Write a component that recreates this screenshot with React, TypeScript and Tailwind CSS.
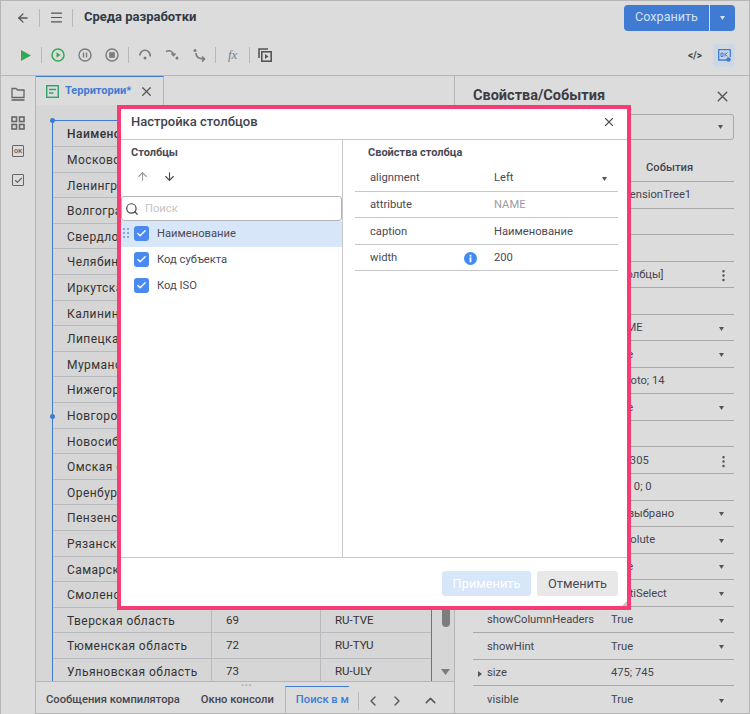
import { ArrowLeft, ArrowDown, ArrowUp, ChevronLeft, ChevronRight, ChevronUp, Check, EllipsisVertical, Menu, Search, X } from "lucide-react";

const FONT = "font-['Roboto','Liberation_Sans',sans-serif]";

const territories: [string, string, string][] = [
  ["Наименование", "Код субъекта", "Код ISO"],
  ["Московская область", "50", "RU-MOS"],
  ["Ленинградская область", "47", "RU-LEN"],
  ["Волгоградская область", "34", "RU-VGG"],
  ["Свердловская область", "66", "RU-SVE"],
  ["Челябинская область", "74", "RU-CHE"],
  ["Иркутская область", "38", "RU-IRK"],
  ["Калининградская область", "39", "RU-KGD"],
  ["Липецкая область", "48", "RU-LIP"],
  ["Мурманская область", "51", "RU-MUR"],
  ["Нижегородская область", "52", "RU-NIZ"],
  ["Новгородская область", "53", "RU-NGR"],
  ["Новосибирская область", "54", "RU-NVS"],
  ["Омская область", "55", "RU-OMS"],
  ["Оренбургская область", "56", "RU-ORE"],
  ["Пензенская область", "58", "RU-PNZ"],
  ["Рязанская область", "62", "RU-RYA"],
  ["Самарская область", "63", "RU-SAM"],
  ["Смоленская область", "67", "RU-SMO"],
  ["Тверская область", "69", "RU-TVE"],
  ["Тюменская область", "72", "RU-TYU"],
  ["Ульяновская область", "73", "RU-ULY"],
];

// name, value, trailing control
const properties: [string, string, "" | "caret" | "dots"][] = [
  ["id", "dimensionTree1", ""],
  ["", "", ""],
  ["", "", ""],
  ["columns", "[Столбцы]", "dots"],
  ["", "", ""],
  ["keyField", "NAME", "caret"],
  ["enabled", "True", "caret"],
  ["font", "Roboto; 14", ""],
  ["hasBorder", "True", "caret"],
  ["", "", ""],
  ["parent", "dim305", "dots"],
  ["padding", "0; 0; 0; 0", ""],
  ["selection", "Не выбрано", "caret"],
  ["positionType", "Absolute", "caret"],
  ["readOnly", "True", "caret"],
  ["selectionMode", "MultiSelect", "caret"],
  ["showColumnHeaders", "True", "caret"],
  ["showHint", "True", "caret"],
  ["size", "475; 745", ""],
  ["visible", "True", "caret"],
];

function Caret({ className = "text-[#555]" }: { className?: string }) {
  return (
    <svg width="5" height="4" viewBox="0 0 5 4" className={className}>
      <path d="M0 0h5L2.5 4z" fill="currentColor" />
    </svg>
  );
}

function Sep() {
  return <div className="w-px h-[16px] bg-[#b8b8b8]" />;
}

function StepIcon({ kind }: { kind: "over" | "into" | "out" }) {
  if (kind === "over")
    return (
      <svg width="14" height="14" viewBox="0 0 14 14" fill="none" stroke="#7a7a7a" strokeWidth="1.6">
        <path d="M1.8 7.5a5.2 5.2 0 0 1 10.4 0" />
        <path d="M12.2 8.5v-2" />
        <circle cx="7" cy="10" r="1.5" fill="#7a7a7a" stroke="none" />
      </svg>
    );
  if (kind === "into")
    return (
      <svg width="14" height="14" viewBox="0 0 14 14" fill="none" stroke="#7a7a7a" strokeWidth="1.6">
        <path d="M1 3.5c3.5-1.5 6.5-0.5 7.5 3" />
        <path d="M6.5 5.5l2 2 2-2" />
        <circle cx="12" cy="10" r="1.5" fill="#7a7a7a" stroke="none" />
      </svg>
    );
  return (
    <svg width="14" height="14" viewBox="0 0 14 14" fill="none" stroke="#7a7a7a" strokeWidth="1.6">
      <path d="M4 5c0 4 2.5 6 8 6" />
      <path d="M10 8.5l2.5 2.5-2.5 2.5" />
      <circle cx="3" cy="2.5" r="1.5" fill="#7a7a7a" stroke="none" />
    </svg>
  );
}

function Header() {
  return (
    <div className="flex items-center h-[36px] shrink-0 pb-[3px]">
      <ArrowLeft size={14} strokeWidth={2.2} className="ml-[15px] text-[#555]" />
      <div className="w-px h-[18px] bg-[#b8b8b8] ml-[9px]" />
      <Menu size={15} strokeWidth={1.8} className="ml-[9px] text-[#555]" />
      <div className="w-px h-[18px] bg-[#b8b8b8] ml-[8px]" />
      <div className="ml-[11px] text-[13px] font-bold text-[#333a45] pb-px">Среда разработки</div>
      <div className="ml-auto mr-[14px] flex h-[26px] text-[#d3e1f5]">
        <div className="w-[85px] bg-[#3f7bd2] rounded-l-[4px] flex items-center justify-center text-[12.6px]">Сохранить</div>
        <div className="w-[25px] ml-px bg-[#3f7bd2] rounded-r-[4px] flex items-center justify-center">
          <Caret className="text-[#d3e1f5]" />
        </div>
      </div>
    </div>
  );
}

function Toolbar() {
  return (
    <div className="flex items-center h-[39px] shrink-0 border-b border-[#b5b5b5] pb-[2px]">
      <svg width="10" height="11" viewBox="0 0 10 11" className="ml-[20px]">
        <path d="M0 0l10 5.5L0 11z" fill="#35a853" />
      </svg>
      <div className="ml-[10px]"><Sep /></div>
      <svg width="14" height="14" viewBox="0 0 14 14" fill="none" className="ml-[9px]">
        <circle cx="7" cy="7" r="6" stroke="#35a853" strokeWidth="1.5" />
        <path d="M5.5 4.2l4 2.8-4 2.8z" fill="#35a853" />
      </svg>
      <svg width="14" height="14" viewBox="0 0 14 14" fill="none" className="ml-[13px]">
        <circle cx="7" cy="7" r="6" stroke="#7c7c7c" strokeWidth="1.4" />
        <path d="M5.5 4.5v5M8.5 4.5v5" stroke="#7c7c7c" strokeWidth="1.4" />
      </svg>
      <svg width="14" height="14" viewBox="0 0 14 14" fill="none" className="ml-[13px]">
        <circle cx="7" cy="7" r="6" stroke="#7c7c7c" strokeWidth="1.4" />
        <rect x="4.2" y="4.2" width="5.6" height="5.6" fill="#7c7c7c" />
      </svg>
      <div className="ml-[9px]"><Sep /></div>
      <div className="ml-[9px]"><StepIcon kind="over" /></div>
      <div className="ml-[13px]"><StepIcon kind="into" /></div>
      <div className="ml-[13px]"><StepIcon kind="out" /></div>
      <div className="ml-[9px]"><Sep /></div>
      <div className="ml-[12px] w-[13px] text-[13px] italic text-[#7c7c7c] font-['Liberation_Serif',serif]">fx</div>
      <div className="ml-[8px]"><Sep /></div>
      <svg width="14" height="14" viewBox="0 0 14 14" fill="none" className="ml-[8px]">
        <path d="M1 10V1h9" stroke="#555" strokeWidth="1.6" />
        <rect x="3.8" y="3.8" width="9.4" height="9.4" stroke="#555" strokeWidth="1.6" />
        <path d="M7 6l3.5 2.5L7 11z" fill="#555" />
      </svg>
      <div className="ml-auto flex items-center mr-[14px]">
        <span className="text-[10px] font-bold text-[#444] mr-[11px]">&lt;/&gt;</span>
        <div className="w-[22px] h-[23px] rounded-[3px] bg-[#ced8e5] flex items-center justify-center">
          <svg width="13" height="13" viewBox="0 0 13 13" fill="none">
            <path d="M9 11H0.7V0.7h11.6V8" stroke="#3f7bd2" strokeWidth="1.3" />
            <path d="M3 4v3.5h2V4zM7 3.5v4M9.5 3.5L7.5 5.5l2 2" stroke="#3f7bd2" strokeWidth="1" />
            <circle cx="10.5" cy="10.5" r="2.2" fill="#3f7bd2" />
          </svg>
        </div>
      </div>
    </div>
  );
}

function SideBar() {
  return (
    <div className="w-[35px] shrink-0 border-r border-[#b5b5b5] flex flex-col items-center pt-[11px] gap-[15px] text-[#666]">
      <svg width="14" height="14" viewBox="0 0 14 14" fill="none" stroke="#666" strokeWidth="1.3">
        <path d="M1 10.5V1.5h4l1.5 1.5H13v7.5z" />
        <path d="M0.5 13h13" strokeWidth="1.6" />
      </svg>
      <svg width="14" height="14" viewBox="0 0 14 14" fill="none" stroke="#666" strokeWidth="1.6">
        <rect x="1" y="1" width="4.5" height="4.5" />
        <rect x="8.5" y="1" width="4.5" height="4.5" />
        <rect x="1" y="8.5" width="4.5" height="4.5" />
        <rect x="8.5" y="8.5" width="4.5" height="4.5" />
      </svg>
      <div className="w-[12px] h-[12px] border border-[#666] rounded-[1px] text-[6px] font-bold leading-[10px] text-center">OK</div>
      <div className="w-[12px] h-[12px] border-[1.5px] border-[#666] rounded-[1px] flex items-center justify-center mt-[2px]">
        <Check size={9} strokeWidth={3} />
      </div>
    </div>
  );
}

function TerritoryTable() {
  return (
    <div className="flex h-full">
      <div className="relative w-[380px] h-full">
        <div className="h-full overflow-hidden border-l-[1.5px] border-r-[1.5px] border-t-[1.5px] border-[#3f7bd2]">
          {territories.map((r, i) => (
            <div key={r[0]} className={`flex border-b border-[#b9b9c0] text-[#333] whitespace-nowrap ${i === 0 ? "h-[26px]" : "h-[25.6px]"}`}>
              <div className={`w-[159px] shrink-0 pl-[14px] text-[12px] tracking-[0.45px] leading-[27px] overflow-hidden border-r border-[#b9b9c0] ${i === 0 ? "font-medium" : ""}`}>{r[0]}</div>
              <div className="w-[109px] shrink-0 pl-[14px] text-[11.5px] leading-[25px] border-r border-[#b9b9c0]">{r[1]}</div>
              <div className="flex-1 pl-[14px] text-[11.5px] leading-[25px]">{r[2]}</div>
            </div>
          ))}
        </div>
        {/* selection handles */}
        <div className="absolute left-[-2px] top-[-2px] w-[5px] h-[5px] rounded-full bg-[#3f7bd2]" />
        <div className="absolute left-[-2px] top-[294px] w-[5px] h-[5px] rounded-full bg-[#3f7bd2]" />
      </div>
      <div className="ml-[9px] w-[9px] flex flex-col items-center">
        <div className="w-[8px] h-[507px] rounded-b-[4px] bg-[#7d7d7d]" />
        <div className="mt-[42px]">
          <svg width="9" height="6" viewBox="0 0 9 6"><path d="M0 0h9L4.5 6z" fill="#7d7d7d" /></svg>
        </div>
      </div>
    </div>
  );
}

function BottomBar() {
  return (
    <div className="relative h-[33px] shrink-0 border-t border-b border-[#b5b5b5] bg-[#dcdcdc] flex items-end text-[11.2px] font-medium text-[#45454f] whitespace-nowrap">
      <div className="absolute top-[2px] left-[205px] text-[#aaa] text-[8px] leading-[4px] tracking-[1px]">•••</div>
      <div className="ml-[10px] h-[26px] leading-[26px] shrink-0">Сообщения компилятора</div>
      <div className="ml-[21px] h-[26px] leading-[26px] shrink-0">Окно консоли</div>
      <div className="ml-[11px] w-[64px] h-[27px] shrink-0 pl-[10px] leading-[26px] overflow-hidden border-t border-l border-t-[#3f7bd2] border-l-[#b5b5b5] text-[#3f7bd2]">Поиск в модуле</div>
      <div className="ml-[9px] mb-[3px] w-px h-[18px] shrink-0 bg-[#b8b8b8]" />
      <ChevronLeft size={16} strokeWidth={2} className="ml-[6px] mb-[4px] shrink-0 text-[#555]" />
      <ChevronRight size={16} strokeWidth={2} className="ml-[8px] mb-[4px] shrink-0 text-[#555]" />
      <ChevronUp size={17} strokeWidth={2} className="ml-[17px] mb-[4px] shrink-0 text-[#555]" />
    </div>
  );
}

function PropertiesPanel() {
  return (
    <div className="w-[295px] shrink-0 border-l border-[#b5b5b5] border-b flex flex-col pl-[18px] pr-[15px]">
      <div className="flex items-center justify-between h-[38px] shrink-0 pt-[2px]">
        <div className="text-[14.5px] font-bold text-[#3c3c46]">Свойства/События</div>
        <X size={17} className="mr-[3px] text-[#555]" />
      </div>
      <div className="h-[26px] shrink-0 border border-[#a8a8a8] rounded-[3px] flex items-center justify-between pl-[14px] pr-[10px] text-[11.2px] text-[#3c3c46]">
        <span>DimensionTree</span>
        <Caret />
      </div>
      <div className="flex h-[42px] shrink-0 text-[11.2px] font-medium text-[#45454f] border-b border-[#a8a8a8]">
        <div className="w-[130px] pt-[20px] text-center">Свойства</div>
        <div className="flex-1 pt-[20px] pl-[43px]">События</div>
      </div>
      {properties.map((p, i) => (
        <div key={i} className="flex items-center h-[26.55px] shrink-0 pt-[2px] border-b border-[#a8a8a8] text-[11.2px] text-[#45454f] last:border-b-0">
          <span className="w-[14px] pl-[5px]">
            {p[0] === "size" && (
              <svg width="4" height="6" viewBox="0 0 4 6"><path d="M0 0l4 3-4 3z" fill="#555" /></svg>
            )}
          </span>
          <span className="w-[124px] whitespace-nowrap">{p[0]}</span>
          <span className="flex-1 whitespace-nowrap">{p[1]}</span>
          {p[2] === "caret" && <Caret className="mr-[10px] text-[#555]" />}
          {p[2] === "dots" && <EllipsisVertical size={15} strokeWidth={2} className="mr-[3px] text-[#555]" />}
        </div>
      ))}
    </div>
  );
}

function ColumnRow({ label, selected }: { label: string; selected?: boolean }) {
  return (
    <div className={`relative flex items-center h-[25.7px] pl-[13px] ${selected ? "bg-[#d8e6f9]" : ""}`}>
      {selected && (
        <svg width="6" height="12" viewBox="0 0 6 12" className="absolute left-[2px] top-[6px]">
          {[1, 5, 9].map((y) => (
            <g key={y} fill="#7fa9e8">
              <rect x="0" y={y} width="2" height="2" />
              <rect x="4" y={y} width="2" height="2" />
            </g>
          ))}
        </svg>
      )}
      <div className="w-[15px] h-[15px] rounded-[3px] bg-[#4a8af0] flex items-center justify-center">
        <Check size={11} strokeWidth={3} className="text-white" />
      </div>
      <span className="ml-[8px] pt-[2px] text-[11.2px] text-[#4a4a55]">{label}</span>
    </div>
  );
}

function PropRow({ name, children, info }: { name: string; children: React.ReactNode; info?: boolean }) {
  return (
    <div className="flex items-center h-[26.6px] pt-[2px] border-b border-[#c8c8cc] text-[11.2px] text-[#4a4a55]">
      <span className="w-[100px] pl-[15px]">{name}</span>
      <span className="w-[39px] flex justify-end pr-[17px]">
        {info && (
          <svg width="13" height="13" viewBox="0 0 13 13">
            <circle cx="6.5" cy="6.5" r="6.5" fill="#3f8bef" />
            <rect x="5.6" y="5.4" width="1.8" height="4.8" fill="#fff" />
            <rect x="5.6" y="2.8" width="1.8" height="1.8" fill="#fff" />
          </svg>
        )}
      </span>
      {children}
    </div>
  );
}

function ColumnsDialog() {
  return (
    <div className="absolute left-[116px] top-[104px] w-[514px] h-[505px] border-[4px] border-[#f73b74] bg-white flex flex-col">
      <div className="flex items-center justify-between h-[31px] shrink-0 border-b border-[#c8c8cc] pl-[10px] pr-[11px]">
        <div className="text-[13px] font-medium text-[#3f4450] pb-[4px]">Настройка столбцов</div>
        <X size={14} strokeWidth={2} className="text-[#555] mb-[4px]" />
      </div>
      <div className="flex flex-1 min-h-0 border-b border-[#c8c8cc]">
        <div className="w-[222px] shrink-0 border-r border-[#c8c8cc] flex flex-col">
          <div className="pl-[10px] pt-[5px] h-[21px] text-[11px] font-bold text-[#4a4a55]">Столбцы</div>
          <div className="flex items-center h-[28px] pt-[2px] pl-[15px] gap-[14px]">
            <ArrowUp size={13} strokeWidth={2} className="text-[#999]" />
            <ArrowDown size={13} strokeWidth={2} className="text-[#444]" />
          </div>
          <div className="flex items-center h-[25px] mt-[7px] border border-[#b5b5b5] rounded-[3px] pl-[3px]">
            <Search size={14} strokeWidth={2} className="text-[#444]" />
            <span className="ml-[6px] pt-[2px] text-[11.2px] text-[#c4c4c4]">Поиск</span>
          </div>
          <ColumnRow label="Наименование" selected />
          <ColumnRow label="Код субъекта" />
          <ColumnRow label="Код ISO" />
        </div>
        <div className="flex-1 pl-[12px] pr-[9px]">
          <div className="pl-[13px] pt-[5px] h-[21px] text-[11px] font-bold text-[#4a4a55]">Свойства столбца</div>
          <div className="h-[4px]" />
          <PropRow name="alignment">
            <span className="flex-1">Left</span>
            <Caret className="mr-[11px] text-[#555]" />
          </PropRow>
          <PropRow name="attribute"><span className="text-[#9c9ca4]">NAME</span></PropRow>
          <PropRow name="caption"><span>Наименование</span></PropRow>
          <PropRow name="width" info><span>200</span></PropRow>
        </div>
      </div>
      <div className="relative flex justify-end items-start h-[48px] shrink-0 pt-[13px] pr-[9px] gap-[6px] text-[12.8px]">
        <div className="w-[89px] h-[25px] rounded-[3px] bg-[#d8e6f9] text-white flex items-center justify-center">Применить</div>
        <div className="w-[81px] h-[25px] rounded-[3px] bg-[#e8e8e8] text-[#4a4a55] flex items-center justify-center">Отменить</div>
        <svg width="5" height="5" viewBox="0 0 5 5" className="absolute right-0 bottom-0"><path d="M5 0v5H0z" fill="#c4c4c4" /></svg>
      </div>
    </div>
  );
}

export default function App() {
  return (
    <div className={`relative w-[750px] h-[714px] overflow-hidden bg-[#dcdcdc] border-t border-l border-r border-[#b5b5b5] ${FONT} flex flex-col`}>
      <Header />
      <Toolbar />
      <div className="flex flex-1 min-h-0">
        <SideBar />
        <div className="flex-1 min-w-0 flex flex-col">
          <div className="h-[29px] shrink-0 flex">
            <div className="w-[128px] h-full border-t-[1.5px] border-t-[#3f7bd2] border-r border-r-[#b5b5b5] flex items-center pl-[10px]">
              <svg width="13" height="13" viewBox="0 0 13 13" fill="none" stroke="#2fa36b" strokeWidth="1.4">
                <rect x="0.7" y="0.7" width="11.6" height="11.6" />
                <path d="M3 4.5h7M3 8h4.5" />
              </svg>
              <span className="ml-[6px] text-[11px] font-bold text-[#3f7bd2]">Территории*</span>
              <X size={15} strokeWidth={2} className="ml-[8px] text-[#555]" />
            </div>
          </div>
          <div className="flex-1 min-h-0 bg-[#d6d6d6] pl-[16px] pt-[15px]">
            <TerritoryTable />
          </div>
          <BottomBar />
        </div>
        <PropertiesPanel />
      </div>
      <ColumnsDialog />
    </div>
  );
}
